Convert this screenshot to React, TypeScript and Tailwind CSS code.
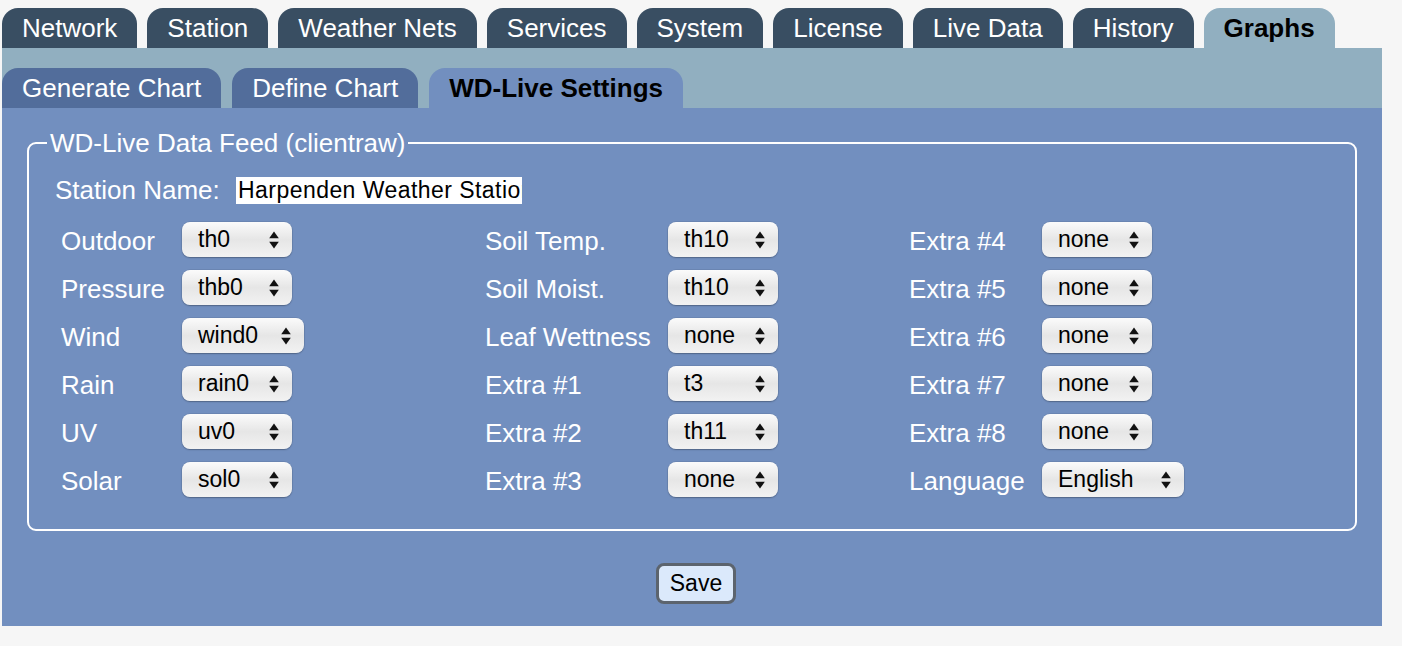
import React from "react";

const topTabs = ["Network", "Station", "Weather Nets", "Services", "System", "License", "Live Data", "History", "Graphs"];
const subTabs = ["Generate Chart", "Define Chart", "WD-Live Settings"];

type Cell = { label: string; value: string; w: string };
const rows: Cell[][] = [
  [
    { label: "Outdoor", value: "th0", w: "w-[110px]" },
    { label: "Soil Temp.", value: "th10", w: "w-[110px]" },
    { label: "Extra #4", value: "none", w: "w-[110px]" },
  ],
  [
    { label: "Pressure", value: "thb0", w: "w-[110px]" },
    { label: "Soil Moist.", value: "th10", w: "w-[110px]" },
    { label: "Extra #5", value: "none", w: "w-[110px]" },
  ],
  [
    { label: "Wind", value: "wind0", w: "w-[122px]" },
    { label: "Leaf Wettness", value: "none", w: "w-[110px]" },
    { label: "Extra #6", value: "none", w: "w-[110px]" },
  ],
  [
    { label: "Rain", value: "rain0", w: "w-[110px]" },
    { label: "Extra #1", value: "t3", w: "w-[110px]" },
    { label: "Extra #7", value: "none", w: "w-[110px]" },
  ],
  [
    { label: "UV", value: "uv0", w: "w-[110px]" },
    { label: "Extra #2", value: "th11", w: "w-[110px]" },
    { label: "Extra #8", value: "none", w: "w-[110px]" },
  ],
  [
    { label: "Solar", value: "sol0", w: "w-[110px]" },
    { label: "Extra #3", value: "none", w: "w-[110px]" },
    { label: "Language", value: "English", w: "w-[142px]" },
  ],
];

function Arrows() {
  return (
    <svg width="10" height="18" viewBox="0 0 10 18" className="shrink-0">
      <path d="M5 0.5 L9.8 7.2 L0.2 7.2 Z" fill="#111" />
      <path d="M5 17.5 L9.8 10.8 L0.2 10.8 Z" fill="#111" />
    </svg>
  );
}

function FakeSelect({ value, w }: { value: string; w: string }) {
  return (
    <div
      className={`${w} h-[35px] rounded-[8px] flex items-center justify-between pl-[16px] pr-[13px] text-[23px] text-black bg-gradient-to-b from-[#fbfbfb] via-[#e6e6e6] to-[#f2f2f2] shadow-[0_0_0_0.5px_rgba(0,0,0,0.12),0_1px_1.5px_rgba(0,0,0,0.25)]`}
    >
      <span className="leading-none">{value}</span>
      <Arrows />
    </div>
  );
}

export default function App() {
  return (
    <div
      className="min-h-[646px] bg-[#f6f6f6] pl-[2px] pr-[20px]"
      style={{ fontFamily: '"Liberation Sans", Arial, Helvetica, sans-serif' }}
    >
      <div className="flex gap-[10px] pt-[8px]">
        {topTabs.map((t) => {
          const active = t === "Graphs";
          return (
            <div
              key={t}
              className={`h-[40px] px-[20px] flex items-center rounded-t-[16px] text-[26px] leading-none ${
                active ? "bg-[#91afc0] text-black font-bold" : "bg-[#394e62] text-white"
              }`}
            >
              {t}
            </div>
          );
        })}
      </div>
      <div className="bg-[#91afc0] h-[60px] pt-[20px] flex gap-[11px]">
        {subTabs.map((t) => {
          const active = t === "WD-Live Settings";
          return (
            <div
              key={t}
              className={`h-[40px] px-[20px] flex items-center rounded-t-[16px] text-[26px] leading-none ${
                active ? "bg-[#728fbf] text-black font-bold" : "bg-[#526d9b] text-white"
              }`}
            >
              {t}
            </div>
          );
        })}
      </div>
      <div className="bg-[#728fbf] h-[518px] pt-[21px] px-[25px]">
        <fieldset className="border-2 border-white rounded-[9px] pb-[32px]">
          <legend className="ml-[18px] px-[3px] text-[26px] leading-[28px] text-white">
            WD-Live Data Feed (clientraw)
          </legend>
          <div className="flex items-center h-[28px] mt-[19px] pl-[26px]">
            <span className="text-[26px] text-white w-[181px] leading-none">Station Name:</span>
            <div className="w-[286px] h-[27px] bg-white overflow-hidden flex items-center pl-[2px] text-[23px] tracking-[0.45px] text-black whitespace-nowrap">
              Harpenden Weather Station
            </div>
          </div>
          <div className="mt-[18px] pl-[32px] grid grid-cols-[121px_303px_183px_241px_133px_auto] gap-y-[13px] items-center">
            {rows.map((r, i) => (
              <React.Fragment key={i}>
                {r.map((c) => (
                  <React.Fragment key={c.label}>
                    <span className="text-[26px] text-white leading-none pt-[2px]">{c.label}</span>
                    <div>
                      <FakeSelect value={c.value} w={c.w} />
                    </div>
                  </React.Fragment>
                ))}
              </React.Fragment>
            ))}
          </div>
        </fieldset>
        <div className="flex justify-center mt-[32px] pl-[8px]">
          <button className="w-[80px] h-[41px] rounded-[8px] border-[3px] border-[#5c646e] bg-[#dbe9fb] text-[23px] text-black">
            Save
          </button>
        </div>
      </div>
    </div>
  );
}
